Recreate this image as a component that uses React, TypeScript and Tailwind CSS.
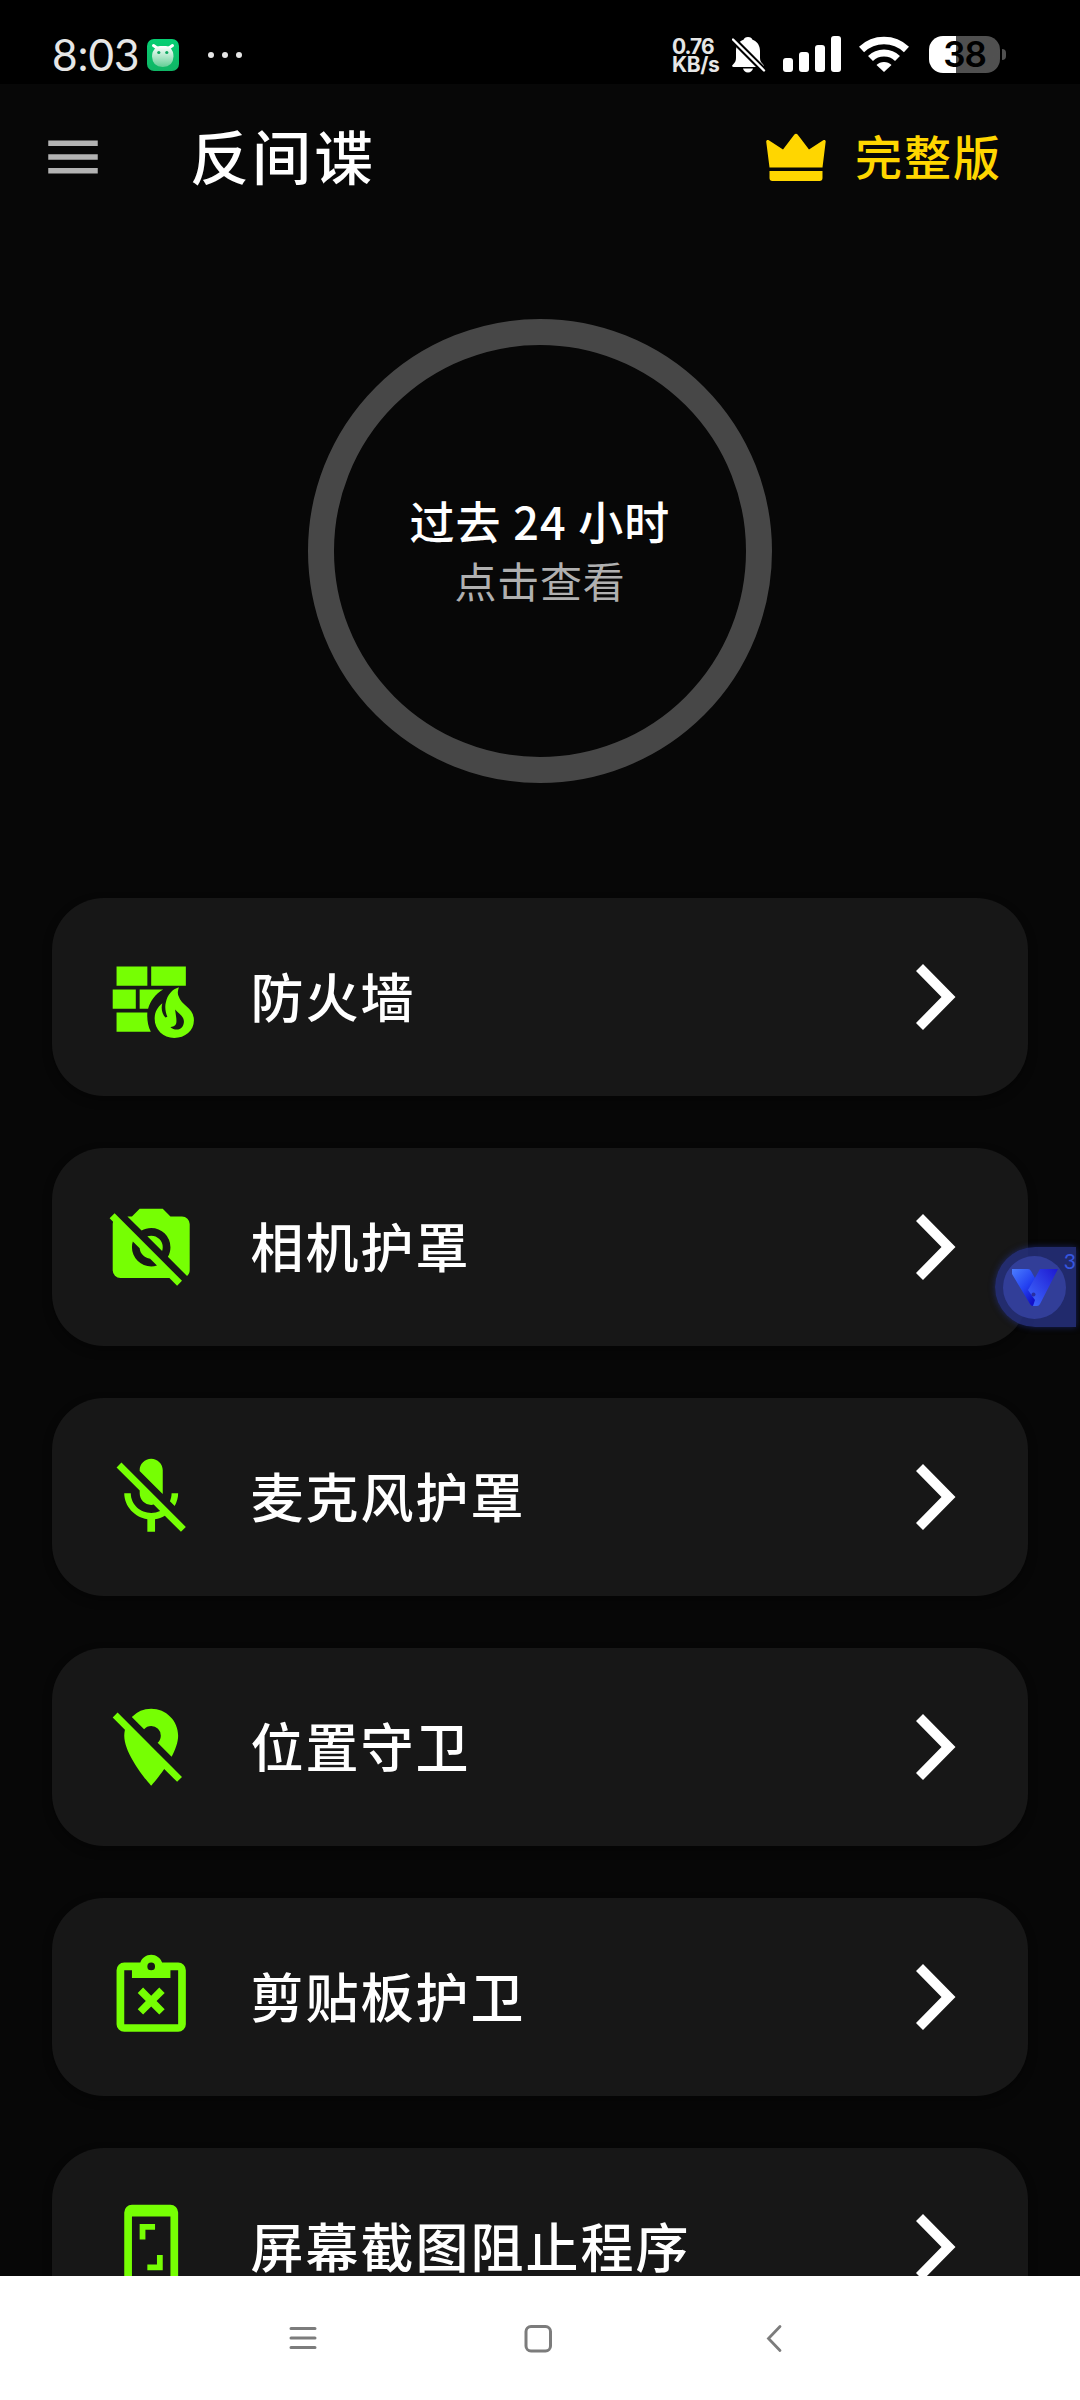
import type { ReactNode } from 'react';
import { MdLocationOff, MdMicOff, MdMenu } from 'react-icons/md';

interface GuardItem {
  label: string;
  icon: ReactNode;
}

const iconClass = 'size-[92.4px] shrink-0 fill-[#76ff03] text-[#76ff03]';

function FirewallIcon() {
  return (
    <svg viewBox="0 0 24 24" className={iconClass}>
      <path d="M3 4h8v5H3zM12 4h9v5h-9zM2 10h6v5H2zM9 10h6.1c-2 1.2-3.4 3-3.9 5H9zM3 16h8c-.1 1.8.1 3.4.9 5H3z" />
      <path
        fillRule="evenodd"
        d="M19.2 9.4c-.3 1-.4 1.6-.1 2.3.8 2.6 4 3 4 6.3 0 2.7-2.3 4.6-5.1 4.6-2.9 0-5.1-2.2-5.100-5 0-1.700.7-3 2-4-.4 1.300-.1 2.800.8 3.700l.5-.2c-.5-1.200-.7-2.600-.4-3.700.4-2.100 1.700-3.500 3.400-4zM18.200 15.200c.2 1.700.7 3.400 0 4.100-.3.3-.7.4-1.200.5.5.4 1 .6 1.600.6 1.200 0 1.900-1 1.900-2.100 0-1.300-1.300-2-2.300-3.100z"
      />
    </svg>
  );
}

function CameraOffIcon() {
  return (
    <svg viewBox="0 0 24 24" className={iconClass}>
      <path d="M1.2,4.47L2.5,3.2L20,20.72L18.73,22L16.73,20H4A2,2 0 0,1 2,18V6C2,5.78 2.04,5.57 2.1,5.37L1.2,4.47M7,4L9,2H15L17,4H20A2,2 0 0,1 22,6V18C22,18.6 21.74,19.13 21.32,19.5L16.33,14.5C16.76,13.77 17,12.91 17,12A5,5 0 0,0 12,7C11.09,7 10.23,7.24 9.5,7.67L5.82,4H7M7,12A5,5 0 0,0 12,17C12.5,17 13.03,16.92 13.5,16.77L11.72,15C10.29,14.85 9.15,13.71 9,12.28L7.23,10.5C7.08,10.97 7,11.5 7,12M12,9A3,3 0 0,1 15,12C15,12.35 14.94,12.69 14.83,13L11,9.17C11.31,9.06 11.65,9 12,9Z" />
    </svg>
  );
}

function ClipboardIcon() {
  return (
    <svg viewBox="0 0 24 24" className={iconClass}>
      <path d="M19,3H14.82C14.4,1.84 13.3,1 12,1C10.7,1 9.6,1.84 9.18,3H5A2,2 0 0,0 3,5V19A2,2 0 0,0 5,21H19A2,2 0 0,0 21,19V5A2,2 0 0,0 19,3M12,3A1,1 0 0,1 13,4A1,1 0 0,1 12,5A1,1 0 0,1 11,4A1,1 0 0,1 12,3M7,7H17V5H19V19H5V5H7V7Z" />
      <path d="M9.9 9.5 8.5 10.9 10.6 13 8.5 15.1 9.9 16.5 12 14.4 14.1 16.5 15.5 15.1 13.4 13 15.5 10.9 14.1 9.5 12 11.6z" />
    </svg>
  );
}

function ScreenshotIcon() {
  return (
    <svg viewBox="0 0 24 24" className={iconClass}>
      <path d="M17 1H7a2 2 0 0 0-2 2v18a2 2 0 0 0 2 2h10a2 2 0 0 0 2-2V3a2 2 0 0 0-2-2zm0 19H7V4h10zM9 6h4v1.5h-2.5V10H9zM15 18h-4v-1.5h2.5V14H15z" />
    </svg>
  );
}

const items: GuardItem[] = [
  { label: '防火墙', icon: <FirewallIcon /> },
  { label: '相机护罩', icon: <CameraOffIcon /> },
  { label: '麦克风护罩', icon: <MdMicOff className={iconClass} /> },
  { label: '位置守卫', icon: <MdLocationOff className={iconClass} /> },
  { label: '剪贴板护卫', icon: <ClipboardIcon /> },
  { label: '屏幕截图阻止程序', icon: <ScreenshotIcon /> },
];

function StatusBar() {
  return (
    <div className="flex h-[84px] shrink-0 items-start bg-black pt-9 pl-[52px] font-['Lato',sans-serif] text-[#e6e6e6]">
      <span className="mt-[-4px] w-[95px] text-[44px] leading-[44px] whitespace-nowrap">8:03</span>
      <svg viewBox="0 0 32 32" className="mt-[3px] size-8">
        <defs>
          <linearGradient id="tile" x1="0" y1="0" x2="0" y2="1">
            <stop offset="0" stopColor="#06cf73" />
            <stop offset="1" stopColor="#10b565" />
          </linearGradient>
          <linearGradient id="face" x1="0" y1="0" x2="0" y2="1">
            <stop offset="0" stopColor="#fff" />
            <stop offset="1" stopColor="#62cf96" />
          </linearGradient>
        </defs>
        <rect width="32" height="32" rx="7" fill="url(#tile)" />
        <path d="M6.5 6.5 10 9M25.5 6.5 22 9" stroke="#fff" strokeWidth="3" strokeLinecap="round" />
        <path d="M9 8.5Q10 7 13 7h6q3 0 4 1.5Q26.5 12 26.5 17.5 26 28 15.8 28 5.5 28 5 17.5 5 12 9 8.5z" fill="url(#face)" />
        <circle cx="11.8" cy="13.5" r="1.6" fill="#0fa860" />
        <circle cx="19.8" cy="13.5" r="1.6" fill="#0fa860" />
      </svg>
      <div className="mt-4 ml-[29px] flex gap-2">
        <span className="size-1.5 rounded-full bg-[#e6e6e6]" />
        <span className="size-1.5 rounded-full bg-[#e6e6e6]" />
        <span className="size-1.5 rounded-full bg-[#e6e6e6]" />
      </div>
      <div className="mt-[2px] ml-[430px] flex w-[60px] flex-col font-['Inter',sans-serif] text-[21px] leading-[18px] font-bold">
        <span className="tracking-[-1px]">0.76</span>
        <span className="tracking-[-0.4px]">KB/s</span>
      </div>
      <svg viewBox="0 0 34 36" className="mt-px h-9 w-[34px]">
        <mask id="bellCut">
          <rect width="34" height="36" fill="#fff" />
          <path d="M-1 .5 34 35.500" stroke="#000" strokeWidth="6.5" />
        </mask>
        <g mask="url(#bellCut)" fill="#fff">
          <path d="M16 0c2.5 0 4 1.2 4.5 2.8C25.5 4.5 28 9 28 14v7c0 3.5 1.5 4.5 3.5 7 .8 1.2.3 2-1 2H1.5C0 30-.3 29 .6 28 3 25.5 4 24 4 21v-7c0-5 2.5-9.5 7.5-11.2C12 1.2 13.5 0 16 0z" />
          <path d="M11 31.5h10c-.5 2.3-2.3 4-5 4s-4.5-1.7-5-4z" />
        </g>
        <path d="M1 2.5 32 33.5" stroke="#fff" strokeWidth="2.4" strokeLinecap="round" />
      </svg>
      <div className="ml-[17px] flex h-9 items-end gap-1.5">
        <span className="h-3.5 w-2.5 rounded-[3px] bg-white" />
        <span className="h-5 w-2.5 rounded-[3px] bg-white" />
        <span className="h-[27px] w-2.5 rounded-[3px] bg-white" />
        <span className="h-9 w-2.5 rounded-[3px] bg-white" />
      </div>
      <svg viewBox="0 0 50 36" className="ml-[18px] h-9 w-[50px]" fill="none" stroke="#fff">
        <path d="M2.5 13.5Q12 4.5 25 4.5t22.5 9" strokeWidth="7.5" />
        <path d="M11.5 22.5Q17 17 25 17t13.5 5.5" strokeWidth="7" />
        <path d="M25 36 17.5 29Q20.5 26 25 26t7.5 3z" fill="#fff" stroke="none" />
      </svg>
      <div className="ml-5 flex items-center gap-0.5">
        <div className="flex h-[37px] w-[71px] items-center justify-center rounded-[14px] bg-linear-to-r from-white from-[38%] to-[#505050] to-[38%] font-['Inter',sans-serif] text-[35px] leading-none font-semibold tracking-[-1px] text-black">
          38
        </div>
        <span className="h-[11px] w-1 rounded-r-full bg-[#505050]" />
      </div>
    </div>
  );
}

function Header() {
  return (
    <header className="flex h-[146px] shrink-0 items-center pl-10">
      <MdMenu className="size-[66px] text-[#b3b3b3]" />
      <h1 className="mb-[5px] ml-[84px] w-[575px] text-[59px] leading-[80px] font-medium tracking-[3px]">反间谍</h1>
      <svg viewBox="0 0 62 48" className="h-12 w-[62px] fill-[#ffd600]">
        <path d="M1.2 8.5c0-1.5 1.5-2 2.6-1.2L18 16.5 29.2 1.7c1-1.3 2.6-1.3 3.6 0L44 16.5l14.200-9.200c1.200-.8 2.600-.3 2.500 1.200L57.500 34.500h-53z" />
        <path d="M4.5 38h53v7a3 3 0 0 1-3 3h-47a3 3 0 0 1-3-3z" />
      </svg>
      <span className="mb-[5px] ml-[28px] text-[47px] leading-[64px] font-medium tracking-[2px] whitespace-nowrap text-[#ffd600]">
        完整版
      </span>
    </header>
  );
}

function GuardCard({ label, icon }: GuardItem) {
  return (
    <div className="flex h-[198px] shrink-0 items-center rounded-[52px] bg-[#171717] pr-[72px] pl-[53px] shadow-[0_4px_10px_rgba(0,0,0,0.35)]">
      {icon}
      <span className="mb-[4px] ml-[53px] flex-1 text-[53px] leading-[72px] font-medium tracking-[2px]">{label}</span>
      <svg viewBox="0 0 40 66" className="h-[66px] w-10 fill-white">
        <path d="M7 0 0 7 25.5 33 0 59l7 7 32.500-33z" />
      </svg>
    </div>
  );
}

function FloatingBadge() {
  return (
    <div className="absolute top-[1247px] right-1 h-20 w-[81px] rounded-l-full bg-[#26307e]/85 shadow-[0_0_6px_rgba(40,60,180,0.5)]">
      <div className="absolute top-[9px] left-2 flex size-[63px] items-center justify-center rounded-full bg-[#323e98]">
        <svg viewBox="0 0 46 38" className="h-[38px] w-[46px]">
          <defs>
            <linearGradient id="wingLeft" x1="0" y1="0" x2="0.7" y2="1">
              <stop offset="0" stopColor="#4b7dff" />
              <stop offset="0.6" stopColor="#2340f0" />
              <stop offset="1" stopColor="#1210c8" />
            </linearGradient>
            <linearGradient id="wingRight" x1="1" y1="0" x2="0" y2="1">
              <stop offset="0" stopColor="#1d18d0" />
              <stop offset="1" stopColor="#3f6bff" />
            </linearGradient>
          </defs>
          <path d="M0 0h16q2 0 3 2l5 9v26h-3q-2 0-3-2L0 5z" fill="url(#wingLeft)" />
          <path d="M28 0h18L28 35q-1 2-3 2h-4l2-6-7-10z" fill="url(#wingRight)" />
          <circle cx="21.5" cy="25.5" r="2" fill="#2a2fa0" />
        </svg>
      </div>
      <span className="absolute top-[4px] right-0 font-['Lato',sans-serif] text-[21px] leading-[20px] text-[#3656e0]">3</span>
    </div>
  );
}

function NavBar() {
  return (
    <nav className="z-10 flex h-[124px] shrink-0 items-start bg-white pt-[48px] pl-[289px]">
      <svg viewBox="0 0 28 30" className="h-[30px] w-7" stroke="#7c7c7c" strokeWidth="3" strokeLinecap="round">
        <path d="M2 4.5h24M2 14h24M2 23.5h24" />
      </svg>
      <svg viewBox="0 0 30 30" className="ml-[206px] size-[30px]" fill="none" stroke="#7c7c7c" strokeWidth="3">
        <rect x="3" y="2.5" width="24.5" height="24.5" rx="5" />
      </svg>
      <svg viewBox="0 0 18 30" className="ml-[212px] h-[30px] w-[18px]" fill="none" stroke="#7c7c7c" strokeWidth="2.8" strokeLinecap="round">
        <path d="M15 2.5 3.5 14.5 15 26.5" />
      </svg>
    </nav>
  );
}

export default function App() {
  return (
    <div
      lang="zh-CN"
      className="relative flex h-[2400px] w-[1080px] flex-col overflow-hidden bg-[#070707] font-['Noto_Sans_CJK_SC',sans-serif] text-white"
    >
      <StatusBar />
      <Header />
      <main className="flex min-h-0 flex-1 flex-col overflow-hidden px-[52px] pt-[89px]">
        <div className="flex size-[464px] shrink-0 flex-col items-center justify-center self-center rounded-full border-[26px] border-[#474747]">
          <p className="text-[45px] leading-[59px] font-medium tracking-[1.2px] whitespace-nowrap">过去 24 小时</p>
          <p className="mb-[2px] text-[42px] leading-[59px] tracking-[0.8px] whitespace-nowrap text-[#b0b0b0]">点击查看</p>
        </div>
        <div className="mt-[115px] flex flex-col gap-[52px]">
          {items.map((item) => (
            <GuardCard key={item.label} {...item} />
          ))}
        </div>
      </main>
      <FloatingBadge />
      <NavBar />
    </div>
  );
}
